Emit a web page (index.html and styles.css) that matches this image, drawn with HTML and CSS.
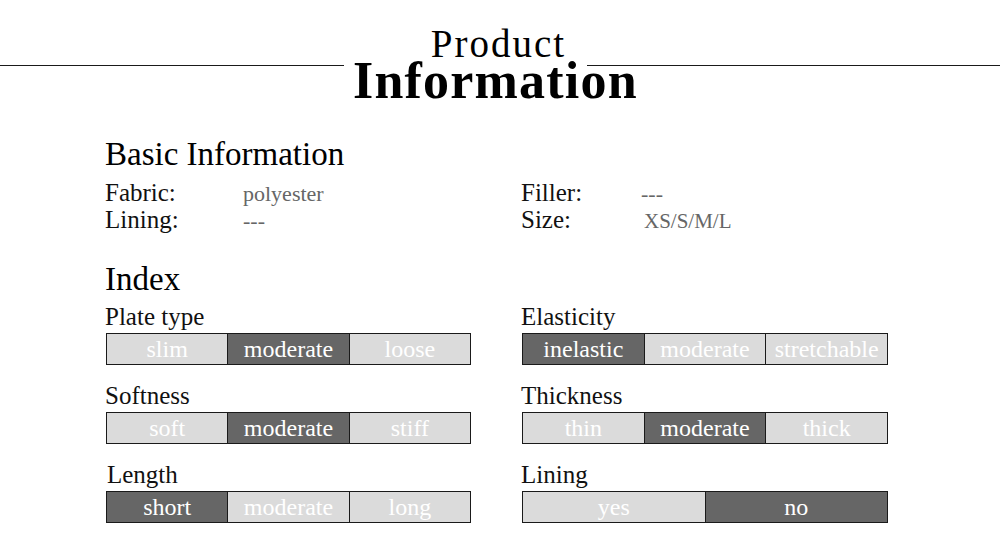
FILE: index.html
```html
<!DOCTYPE html>
<html>
<head>
<meta charset="utf-8">
<link rel="stylesheet" href="styles.css">
</head>
<body>
<header class="hero">
  <div class="rule rule-left"></div>
  <h1 class="title"><span class="title-top">Product</span><span class="title-main">Information</span></h1>
  <div class="rule rule-right"></div>
</header>
<main class="content">
  <h2 class="section-title">Basic Information</h2>
  <div class="info">
    <div class="info-col info-left">
      <span class="info-label">Fabric:</span><span class="info-value">polyester</span>
      <span class="info-label">Lining:</span><span class="info-value">---</span>
    </div>
    <div class="info-col info-right">
      <span class="info-label">Filler:</span><span class="info-value">---</span>
      <span class="info-label">Size:</span><span class="info-value size">XS/S/M/L</span>
    </div>
  </div>
  <h2 class="section-title index-title">Index</h2>
  <div class="index">
    <div class="metric">
      <div class="metric-label">Plate type</div>
      <div class="bar"><span>slim</span><span class="on">moderate</span><span>loose</span></div>
    </div>
    <div class="metric">
      <div class="metric-label">Elasticity</div>
      <div class="bar"><span class="on">inelastic</span><span>moderate</span><span>stretchable</span></div>
    </div>
    <div class="metric">
      <div class="metric-label">Softness</div>
      <div class="bar"><span>soft</span><span class="on">moderate</span><span>stiff</span></div>
    </div>
    <div class="metric">
      <div class="metric-label">Thickness</div>
      <div class="bar"><span>thin</span><span class="on">moderate</span><span>thick</span></div>
    </div>
    <div class="metric">
      <div class="metric-label indent">Length</div>
      <div class="bar"><span class="on">short</span><span>moderate</span><span>long</span></div>
    </div>
    <div class="metric">
      <div class="metric-label">Lining</div>
      <div class="bar"><span>yes</span><span class="on">no</span></div>
    </div>
  </div>
</main>
</body>
</html>
```
FILE: styles.css
```css
* { box-sizing: border-box; }
html, body { margin: 0; padding: 0; background: #fff; }
body {
  width: 1000px;
  height: 540px;
  overflow: hidden;
  font-family: "Liberation Serif", "DejaVu Serif", serif;
  color: #111;
}
.hero {
  display: flex;
  align-items: flex-start;
  padding-top: 26px;
}
.rule {
  height: 1px;
  background: #1a1a1a;
  margin-top: 39px;
}
.rule-left {
  flex: 0 0 344px;
  margin-right: 9px;
}
.rule-right {
  flex: 1;
  margin-left: -51px;
}
.title {
  margin: 0;
  display: flex;
  flex-direction: column;
  align-items: center;
  font-weight: normal;
  color: #000;
}
.title-top {
  font-size: 39px;
  line-height: 36px;
  letter-spacing: 2px;
  padding-left: 6px;
}
.title-main {
  font-size: 52px;
  font-weight: bold;
  line-height: 38px;
  letter-spacing: 1.2px;
}
.content {
  padding: 0 0 0 105px;
}
.section-title {
  margin: 36px 0 0;
  font-size: 33px;
  font-weight: normal;
  line-height: 36px;
  color: #000;
}
.info {
  display: grid;
  grid-template-columns: 416px 300px;
  margin-top: 8px;
}
.info-col {
  display: grid;
  grid-template-columns: 138px auto;
  align-items: baseline;
}
.info-right { grid-template-columns: 120px auto; }
.info-label { font-size: 25px; line-height: 26px; }
.info-value { font-size: 22px; line-height: 26px; color: #666; }
.info-value.size { font-size: 21px; padding-left: 3px; }
.index-title { margin-top: 27px; }
.index {
  display: grid;
  grid-template-columns: 366px 367px;
  column-gap: 50px;
  row-gap: 16px;
  margin-top: 5px;
}
.metric-label {
  font-size: 25px;
  line-height: 30px;
  margin-bottom: 1px;
}
.metric-label.indent { padding-left: 2px; }
.bar {
  display: flex;
  height: 32px;
  margin-left: 1px;
  border: 1px solid #1a1a1a;
  background: #dbdbdb;
}
.bar span {
  flex: 1;
  text-align: center;
  font-size: 24px;
  line-height: 31px;
  color: #fff;
}
.bar span + span { border-left: 1px solid #1a1a1a; }
.bar .on { background: #666; }
```
